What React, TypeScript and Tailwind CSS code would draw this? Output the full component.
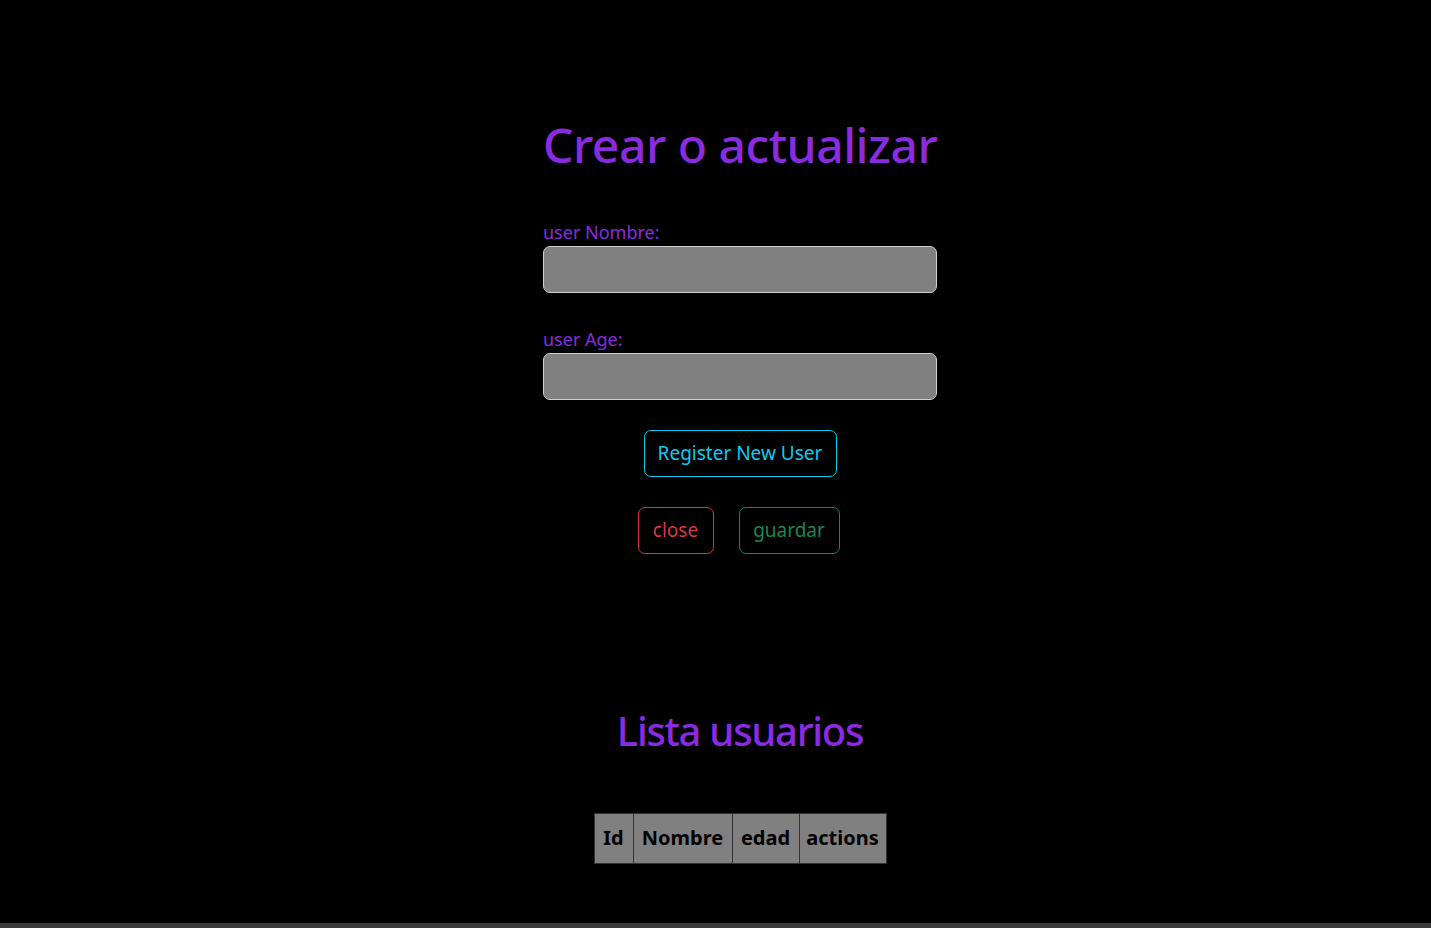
import { useState } from 'react'

const font = { fontFamily: '"Noto Sans", "Open Sans", sans-serif' }

export default function App() {
  const [nombre, setNombre] = useState('')
  const [age, setAge] = useState('')

  return (
    <div className="flex h-[928px] flex-col bg-black" style={font}>
      <main className="flex flex-1 flex-col items-center pl-[49px]">
        {/* Form */}
        <section className="mt-[116px] flex w-[394px] flex-col">
          <h1 className="text-center text-[48px] leading-[1.2] font-medium tracking-[-0.01em] whitespace-nowrap text-[#8a2be2]">
            Crear o actualizar
          </h1>

          <label className="mt-[46px] pb-[2px] text-[18px] leading-[24px] text-[#8a2be2]">user Nombre:</label>
          <input
            value={nombre}
            onChange={(e) => setNombre(e.target.value)}
            className="h-[47px] w-full rounded-[7px] border border-[#cfcfcf] bg-[#808080] px-4 text-[20px] outline-none"
          />

          <label className="mt-[34px] pb-[2px] text-[18px] leading-[24px] text-[#8a2be2]">user Age:</label>
          <input
            value={age}
            onChange={(e) => setAge(e.target.value)}
            className="h-[47px] w-full rounded-[7px] border border-[#cfcfcf] bg-[#808080] px-4 text-[20px] outline-none"
          />

          <div className="mt-[30px] flex justify-center">
            <button className="h-[47px] w-[193px] rounded-[7px] border border-[#0dcaf0] text-[19px] whitespace-nowrap text-[#0dcaf0]">
              Register New User
            </button>
          </div>

          <div className="mt-[30px] flex justify-center gap-[25px] pr-[3px]">
            <button className="h-[47px] w-[76px] rounded-[7px] border border-[#dc3545] text-[19px] text-[#dc3545]">
              close
            </button>
            <button className="h-[47px] w-[101px] rounded-[7px] border border-[#198754] text-[19px] text-[#198754]">
              guardar
            </button>
          </div>
        </section>

        {/* List */}
        <h2 className="mt-[153px] text-[40px] leading-[1.2] font-medium tracking-[-0.032em] whitespace-nowrap text-[#8a2be2]">
          Lista usuarios
        </h2>

        <table className="mt-[58px] border-collapse text-[20px] font-bold text-black">
          <thead>
            <tr className="h-[50px] bg-[#808080]">
              <th className="w-[39px] border border-[#333]">Id</th>
              <th className="w-[99px] border border-[#333]">Nombre</th>
              <th className="w-[67px] border border-[#333]">edad</th>
              <th className="w-[87px] border border-[#333]">actions</th>
            </tr>
          </thead>
          <tbody />
        </table>
      </main>
      <div className="h-[5px] bg-[#3c3c3c]" />
    </div>
  )
}
